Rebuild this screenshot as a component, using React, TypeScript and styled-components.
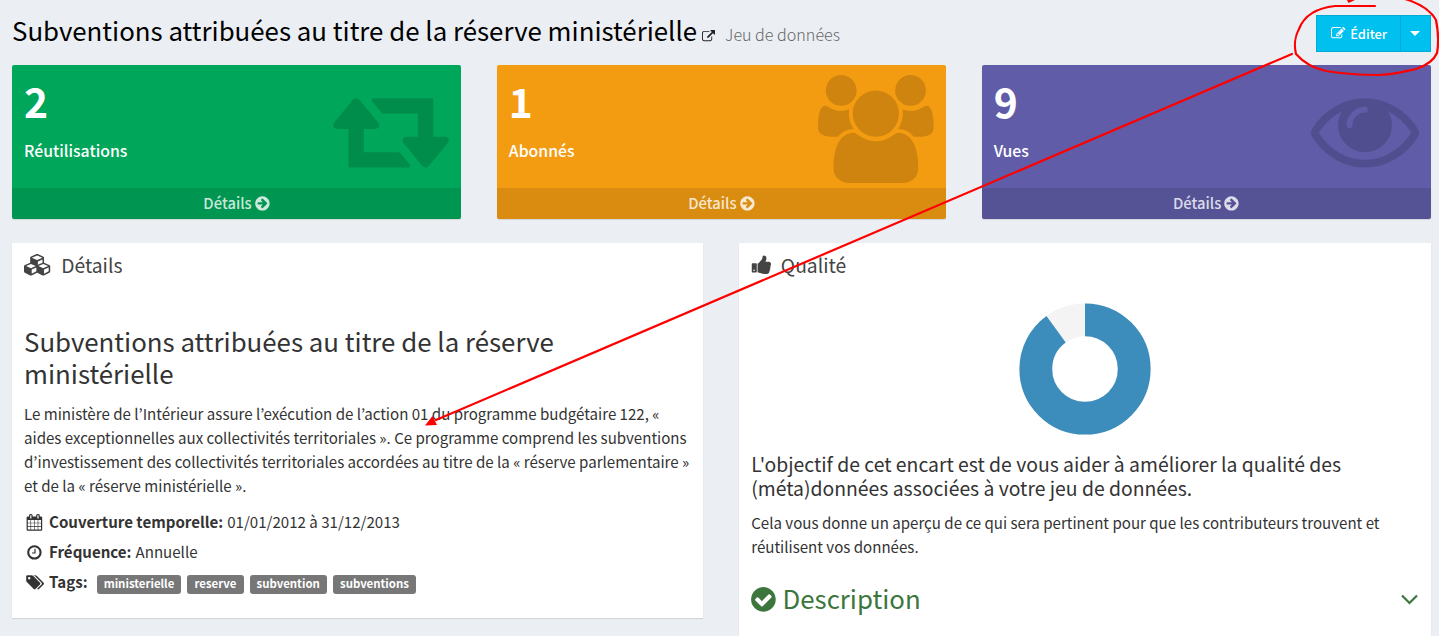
import React from "react";
import styled, { createGlobalStyle } from "styled-components";

const Global = createGlobalStyle`
  * { box-sizing: border-box; }
  body {
    margin: 0;
    background: #ebeff4;
    color: #333;
    font-family: "Noto Sans CJK KR", sans-serif;
    font-size: 15.08px;
    line-height: 24px;
    overflow: hidden;
  }
  h1, h2, h3, h4, p { margin: 0; font-weight: 400; }
`;

const ICONS = {
  retweet: { w: 1920, d: "M1280 1504q0 13-9.5 22.5t-22.5 9.5h-960q-8 0-13.5-2t-9-7-5.5-8-3-11.5-1-11.5v-600h-192q-26 0-45-19t-19-45q0-24 15-41l320-384q19-22 49-22t49 22l320 384q15 17 15 41 0 26-19 45t-45 19h-192v384h576q16 0 25 11l160 192q7 10 7 21zm640-416q0 24-15 41l-320 384q-20 23-49 23t-49-23l-320-384q-15-17-15-41 0-26 19-45t45-19h192v-384h-576q-16 0-25-12l-160-192q-7-9-7-20 0-13 9.5-22.5t22.5-9.5h960q8 0 13.5 2t9 7 5.5 8 3 11.5 1 11.5v600h192q26 0 45 19t19 45z" },
  users: { w: 1920, d: "M593 896q-162 5-265 128h-134q-82 0-138-40.5t-56-118.5q0-353 124-353 6 0 43.5 21t97.5 42.5 119 21.5q67 0 133-23-5 37-5 66 0 139 81 256zm1071 637q0 120-73 189.5t-194 69.5h-874q-121 0-194-69.5t-73-189.5q0-53 3.5-103.5t14-109 26.5-108.5 43-97.5 62-81 85.5-53.5 111.5-20q10 0 43 21.5t73 48 107 48 135 21.5 135-21.5 107-48 73-48 43-21.5q61 0 111.5 20t85.5 53.5 62 81 43 97.5 26.5 108.5 14 109 3.5 103.5zm-1024-1277q0 106-75 181t-181 75-181-75-75-181 75-181 181-75 181 75 75 181zm704 384q0 159-112.5 271.5t-271.5 112.5-271.5-112.5-112.5-271.5 112.5-271.5 271.5-112.5 271.5 112.5 112.5 271.5zm576 225q0 78-56 118.5t-138 40.5h-134q-103-123-265-128 81-117 81-256 0-29-5-66 66 23 133 23 59 0 119-21.5t97.5-42.5 43.5-21q124 0 124 353zm-128-609q0 106-75 181t-181 75-181-75-75-181 75-181 181-75 181 75 75 181z" },
  eye: { w: 1792, d: "M1664 960q-152-236-381-353 61 104 61 225 0 185-131.5 316.5t-316.5 131.5-316.5-131.5-131.5-316.5q0-121 61-225-229 117-381 353 133 205 333.5 326.5t434.5 121.5 434.5-121.5 333.5-326.5zm-720-384q0-20-14-34t-34-14q-125 0-214.5 89.5t-89.5 214.5q0 20 14 34t34 14 34-14 14-34q0-86 61-147t147-61q20 0 34-14t14-34zm848 384q0 34-20 69-140 230-376.5 368.5t-499.5 138.5-499.5-139-376.5-368q-20-35-20-69t20-69q140-229 376.5-368t499.5-139 499.5 139 376.5 368q20 35 20 69z" },
  external: { w: 1792, d: "M1408 928v320q0 119-84.5 203.5t-203.5 84.5h-832q-119 0-203.5-84.5t-84.5-203.5v-832q0-119 84.5-203.5t203.5-84.5h704q14 0 23 9t9 23v64q0 14-9 23t-23 9h-704q-66 0-113 47t-47 113v832q0 66 47 113t113 47h832q66 0 113-47t47-113v-320q0-14 9-23t23-9h64q14 0 23 9t9 23zm384-864v512q0 26-19 45t-45 19-45-19l-176-176-652 652q-10 10-23 10t-23-10l-114-114q-10-10-10-23t10-23l652-652-176-176q-19-19-19-45t19-45 45-19h512q26 0 45 19t19 45z" },
  edit: { w: 1792, d: "M888 1184l116-116-152-152-116 116v56h96v96h56zm440-720q-16-16-33 1l-350 350q-17 17-1 33t33-1l350-350q17-17 1-33zm80 594v190q0 119-84.5 203.5t-203.5 84.5h-832q-119 0-203.5-84.5t-84.5-203.5v-832q0-119 84.5-203.5t203.5-84.5h832q63 0 117 25 15 7 18 23 3 17-9 29l-49 49q-14 14-32 8-23-6-45-6h-832q-66 0-113 47t-47 113v832q0 66 47 113t113 47h832q66 0 113-47t47-113v-126q0-13 9-22l64-64q15-15 35-7t20 29zm-96-738l288 288-672 672h-288v-288zm444 132l-92 92-288-288 92-92q28-28 68-28t68 28l152 152q28 28 28 68t-28 68z" },
  arrow: { w: 1792, d: "M1413 896q0-27-18-45l-91-91-362-362q-18-18-45-18t-45 18l-91 91q-18 18-18 45t18 45l189 189h-502q-26 0-45 19t-19 45v128q0 26 19 45t45 19h502l-189 189q-19 19-19 45t19 45l91 91q18 18 45 18t45-18l362-362 91-91q18-18 18-45zm251 0q0 209-103 385.5t-279.5 279.5-385.5 103-385.5-103-279.5-279.5-103-385.5 103-385.5 279.5-279.5 385.5-103 385.5 103 279.5 279.5 103 385.5z" },
  check: { w: 1792, d: "M1412 734q0-28-18-46l-91-90q-19-19-45-19t-45 19l-408 407-226-226q-19-19-45-19t-45 19l-91 90q-18 18-18 46 0 27 18 45l362 362q19 19 45 19 27 0 46-19l543-543q18-18 18-45zm252 162q0 209-103 385.5t-279.5 279.5-385.5 103-385.5-103-279.5-279.5-103-385.5 103-385.5 279.5-279.5 385.5-103 385.5 103 279.5 279.5 103 385.5z" },
  thumb: { w: 1792, d: "M320 1344q0-26-19-45t-45-19q-27 0-45.5 19t-18.5 45q0 27 18.5 45.5t45.5 18.5q26 0 45-18.5t19-45.5zm160-512v640q0 26-19 45t-45 19h-288q-26 0-45-19t-19-45v-640q0-26 19-45t45-19h288q26 0 45 19t19 45zm1184 0q0 86-55 149 15 44 15 76 3 76-43 137 17 56 0 117-15 57-54 94 9 112-49 181-64 76-197 78h-129q-66 0-144-15.5t-121.5-29-120.5-39.5q-123-43-158-44-26-1-45-19.5t-19-44.5v-641q0-25 18-43.5t43-20.5q24-2 76-59t101-121q68-87 101-120 18-18 31-48t17.5-48.5 13.5-60.5q7-39 12.5-61t19.5-52 34-50q19-19 45-19 46 0 82.5 10.5t60 26 40 40.5 24 45 12 50 5 45 .5 39q0 38-9.5 76t-19 60-27.5 56q-3 6-10 18t-11 22-8 24h277q78 0 135 57t57 135z" },
  clock: { w: 1792, d: "M1024 544v448q0 14-9 23t-23 9h-320q-14 0-23-9t-9-23v-64q0-14 9-23t23-9h224v-352q0-14 9-23t23-9h64q14 0 23 9t9 23zm416 352q0-148-73-273t-198-198-273-73-273 73-198 198-73 273 73 273 198 198 273 73 273-73 198-198 73-273zm224 0q0 209-103 385.5t-279.5 279.5-385.5 103-385.5-103-279.5-279.5-103-385.5 103-385.5 279.5-279.5 385.5-103 385.5 103 279.5 279.5 103 385.5z" },
  tags: { w: 2048, d: "M576 448q0-53-37.5-90.5t-90.5-37.5-90.5 37.5-37.5 90.5 37.5 90.5 90.5 37.5 90.5-37.5 37.5-90.5zm1067 576q0 53-37 90l-491 492q-39 37-91 37-53 0-90-37l-715-716q-38-37-64.5-101t-26.5-117v-416q0-52 38-90t90-38h416q53 0 117 26.5t102 64.5l715 714q37 39 37 91zm384 0q0 53-37 90l-491 492q-39 37-91 37-36 0-59-14t-53-45l470-470q37-37 37-90 0-52-37-91l-715-714q-38-38-102-64.5t-117-26.5h224q53 0 117 26.5t102 64.5l715 714q37 39 37 91z" },
  calendar: { w: 1792, d: "M192 1664h288v-288h-288v288zm352 0h320v-288h-320v288zm-352-352h288v-320h-288v320zm352 0h320v-320h-320v320zm-352-384h288v-288h-288v288zm736 736h320v-288h-320v288zm-384-736h320v-288h-320v288zm768 736h288v-288h-288v288zm-384-352h320v-320h-320v320zm-352-864v-288q0-13-9.5-22.5t-22.5-9.5h-64q-13 0-22.5 9.5t-9.5 22.5v288q0 13 9.5 22.5t22.5 9.5h64q13 0 22.5-9.5t9.5-22.5zm736 864h288v-320h-288v320zm-384-384h320v-288h-320v288zm384 0h288v-288h-288v288zm32-480v-288q0-13-9.5-22.5t-22.5-9.5h-64q-13 0-22.5 9.5t-9.5 22.5v288q0 13 9.5 22.5t22.5 9.5h64q13 0 22.5-9.5t9.5-22.5zm384-64v1280q0 52-38 90t-90 38h-1408q-52 0-90-38t-38-90v-1280q0-52 38-90t90-38h128v-96q0-66 47-113t113-47h64q66 0 113 47t47 113v96h384v-96q0-66 47-113t113-47h64q66 0 113 47t47 113v96h128q52 0 90 38t38 90z" },
  cubes: { w: 2176, d: "M640 1632l384-192v-314l-384 164v342zm-64-454l404-173-404-173-404 173zm1088 454l384-192v-314l-384 164v342zm-64-454l404-173-404-173-404 173zm-448-293l384-165v-266l-384 164v267zm-64-379l441-189-441-189-441 189zm1088 518v416q0 36-19 67t-52 47l-448 224q-25 14-57 14t-57-14l-448-224q-4-2-7-4-2 2-7 4l-448 224q-25 14-57 14t-57-14l-448-224q-33-16-52-47t-19-67v-416q0-38 21.5-70t56.5-48l434-186v-400q0-38 21.5-70t56.5-48l448-192q23-10 50-10t50 10l448 192q35 16 56.5 48t21.5 70v400l434 186q36 16 57 48t21 70z" },
};
type IconName = keyof typeof ICONS;

const Svg = styled.svg`
  display: block;
  flex: none;
  fill: currentColor;
  overflow: visible;
`;

function Icon({ name, size }: { name: IconName; size: number }) {
  const { w, d } = ICONS[name];
  return (
    <Svg width={(size * w) / 1792} height={size} viewBox={`0 0 ${w} 1792`}>
      <path d={d} />
    </Svg>
  );
}

const Page = styled.main`
  position: relative;
  height: 636px;
  padding: 0 8.5px 0 12px;
  overflow: hidden;
`;

const Header = styled.header`
  display: flex;
  justify-content: space-between;
  height: 65px;
`;

const Heading = styled.div`
  display: flex;
  align-items: baseline;
  padding-top: 12px;
`;

const PageTitle = styled.h1`
  font-size: 25.83px;
  line-height: 36px;
  color: #000;
`;

const LinkIcon = styled.span`
  color: #222;
  margin: 0 10px 0 5px;
  transform: translateY(2px);
`;

const Kind = styled.small`
  font-size: 16.1px;
  font-weight: 300;
  color: #666;
`;

const ButtonGroup = styled.div`
  display: flex;
  margin-top: 15px;
  height: 37px;
`;

const Button = styled.button<{ $width: number }>`
  display: flex;
  align-items: center;
  justify-content: center;
  gap: 5px;
  width: ${(p) => p.$width}px;
  padding: 0 0 0 2px;
  border: 1px solid #00acd6;
  background: #00c0ef;
  color: #fff;
  font: 500 12.9px/20px "Noto Sans CJK KR", sans-serif;

  & + & { border-left: 0; padding: 0; }
`;

const Caret = styled.span`
  border: 5px solid transparent;
  border-top-color: #fff;
  border-bottom: 0;
`;

const Stats = styled.section`
  display: grid;
  grid-template-columns: repeat(3, minmax(0, 1fr));
  gap: 36px;
  height: 154px;
`;

const StatCard = styled.article<{ $color: string }>`
  display: flex;
  flex-direction: column;
  border-radius: 2px;
  overflow: hidden;
  background: ${(p) => p.$color};
  color: #fff;
  box-shadow: 0 1px 1px rgba(0, 0, 0, 0.1);
`;

const StatBody = styled.div`
  display: flex;
  justify-content: space-between;
  height: 122.5px;
  padding: 11px 12px;
`;

const StatValue = styled.div`
  font-size: 40.8px;
  font-weight: 700;
  line-height: 50px;
`;

const StatLabel = styled.div`
  margin-top: 11.5px;
  font-size: 15.8px;
  font-weight: 500;
  line-height: 26px;
`;

const StatIcon = styled.div`
  margin-top: -1px;
  color: rgba(0, 0, 0, 0.15);
`;

const StatFooter = styled.div`
  display: flex;
  align-items: center;
  justify-content: center;
  gap: 2px;
  flex: 1;
  padding-left: 1px;
  background: rgba(0, 0, 0, 0.1);
  color: rgba(255, 255, 255, 0.8);
  font-size: 14.8px;
  font-weight: 500;
`;

const Columns = styled.section`
  display: grid;
  grid-template-columns: repeat(2, minmax(0, 1fr));
  align-items: start;
  gap: 36px;
  margin-top: 23.5px;
`;

const Box = styled.article<{ $height: number }>`
  height: ${(p) => p.$height}px;
  padding: 0 12px;
  background: #fff;
  box-shadow: 0 1px 1px rgba(0, 0, 0, 0.1);
`;

const BoxHeader = styled.header<{ $gap: number }>`
  display: flex;
  align-items: center;
  gap: ${(p) => p.$gap}px;
  height: 47px;
  padding-bottom: 2px;
  color: #444;
`;

const BoxTitle = styled.h3`
  font-size: 19.3px;
`;

const DatasetTitle = styled.h2`
  margin-top: 35.5px;
  padding-bottom: 2px;
  font-size: 25.83px;
  line-height: 31.7px;
`;

const Text = styled.p<{ $top: number }>`
  margin-top: ${(p) => p.$top}px;
  white-space: nowrap;
`;

const Facts = styled.div`
  display: grid;
  gap: 6px;
  margin-top: 12px;
`;

const Fact = styled.div`
  display: flex;
  align-items: center;
  height: 24px;
`;

const FactIcon = styled.span`
  display: flex;
  justify-content: center;
  width: 21px;
  margin-right: 4px;
`;

const FactName = styled.b`
  margin-right: 4px;
`;

const Tag = styled.span`
  height: 19px;
  margin: 5px 1px 0 5px;
  padding: 0 7.1px;
  border-radius: 3px;
  background: #777;
  color: #fff;
  font-size: 11.4px;
  font-weight: 700;
  line-height: 17px;
`;

const Chart = styled.div`
  display: flex;
  justify-content: center;
  margin-top: 13px;
  height: 132px;
`;

const Goal = styled.h4`
  margin-top: 18.5px;
  padding-bottom: 0.5px;
  font-size: 19.38px;
  line-height: 23.8px;
  white-space: nowrap;
`;

const Criterion = styled.div`
  display: flex;
  align-items: center;
  height: 32px;
  margin: 24px 0 0 -2px;
  color: #3c763d;
`;

const CriterionName = styled.span`
  margin-left: 4.5px;
  padding-bottom: 3px;
  font-size: 25.8px;
`;

const Chevron = styled.svg`
  margin-left: auto;
  margin-right: 1px;
`;

const Annotation = styled.svg`
  position: absolute;
  inset: 0;
  pointer-events: none;
`;

const STATS: { value: number; label: string; color: string; icon: IconName }[] = [
  { value: 2, label: "Réutilisations", color: "#00a65a", icon: "retweet" },
  { value: 1, label: "Abonnés", color: "#f39c12", icon: "users" },
  { value: 9, label: "Vues", color: "#605ca8", icon: "eye" },
];

const TAGS = ["ministerielle", "reserve", "subvention", "subventions"];

export default function App() {
  return (
    <Page>
      <Global />
      <Header>
        <Heading>
          <PageTitle>Subventions attribuées au titre de la réserve ministérielle</PageTitle>
          <LinkIcon><Icon name="external" size={13} /></LinkIcon>
          <Kind>Jeu de données</Kind>
        </Heading>
        <ButtonGroup>
          <Button $width={85}><Icon name="edit" size={14.4} />Éditer</Button>
          <Button $width={30}><Caret /></Button>
        </ButtonGroup>
      </Header>

      <Stats>
        {STATS.map((s) => (
          <StatCard key={s.label} $color={s.color}>
            <StatBody>
              <div>
                <StatValue>{s.value}</StatValue>
                <StatLabel>{s.label}</StatLabel>
              </div>
              <StatIcon><Icon name={s.icon} size={108} /></StatIcon>
            </StatBody>
            <StatFooter>Détails <Icon name="arrow" size={16.8} /></StatFooter>
          </StatCard>
        ))}
      </Stats>

      <Columns>
        <Box $height={375.5}>
          <BoxHeader $gap={11}>
            <Icon name="cubes" size={21.6} />
            <BoxTitle>Détails</BoxTitle>
          </BoxHeader>
          <DatasetTitle>
            Subventions attribuées au titre de la réserve<br />ministérielle
          </DatasetTitle>
          <Text $top={12}>
            Le ministère de l’Intérieur assure l’exécution de l’action 01 du programme budgétaire 122, «<br />
            aides exceptionnelles aux collectivités territoriales ». Ce programme comprend les subventions<br />
            d’investissement des collectivités territoriales accordées au titre de la « réserve parlementaire »<br />
            et de la « réserve ministérielle ».
          </Text>
          <Facts>
            <Fact>
              <FactIcon><Icon name="calendar" size={16.8} /></FactIcon>
              <FactName>Couverture temporelle:</FactName>01/01/2012 à 31/12/2013
            </Fact>
            <Fact>
              <FactIcon><Icon name="clock" size={16.8} /></FactIcon>
              <FactName>Fréquence:</FactName>Annuelle
            </Fact>
            <Fact>
              <FactIcon><Icon name="tags" size={16.8} /></FactIcon>
              <FactName>Tags:</FactName>
              {TAGS.map((t) => <Tag key={t}>{t}</Tag>)}
            </Fact>
          </Facts>
        </Box>

        <Box $height={420}>
          <BoxHeader $gap={8}>
            <Icon name="thumb" size={21.6} />
            <BoxTitle>Qualité</BoxTitle>
          </BoxHeader>
          <Chart>
            <svg width="132" height="132" viewBox="-66 -66 132 132">
              <circle r="49.2" fill="none" stroke="#f4f4f4" strokeWidth="32.8" />
              <circle
                r="49.2" fill="none" stroke="#3c8dbc" strokeWidth="32.8"
                pathLength="100" strokeDasharray="90 10" transform="rotate(-90)"
              />
            </svg>
          </Chart>
          <Goal>
            L'objectif de cet encart est de vous aider à améliorer la qualité des<br />
            (méta)données associées à votre jeu de données.
          </Goal>
          <Text $top={10}>
            Cela vous donne un aperçu de ce qui sera pertinent pour que les contributeurs trouvent et<br />
            réutilisent vos données.
          </Text>
          <Criterion>
            <Icon name="check" size={28.8} />
            <CriterionName>Description</CriterionName>
            <Chevron width="17" height="11" viewBox="0 0 17 11">
              <path d="M1 1.5L8.5 9L16 1.5" fill="none" stroke="currentColor" strokeWidth="2.2" />
            </Chevron>
          </Criterion>
        </Box>
      </Columns>

      <Annotation width="1439" height="636" viewBox="0 0 1439 636">
        <g fill="none" stroke="#f00" strokeWidth="2.2" strokeLinecap="round" strokeLinejoin="round">
          <path d="M1292 54L436 420" />
          <path d="M1375 6H1335C1316 8 1304 16 1299 29C1295 36 1294 46 1296 54C1303 62 1312 68 1326 71C1345 74 1362 75 1378 75C1392 75 1402 72 1416 69C1428 65 1434 60 1437 53C1439 42 1438 30 1436 20C1430 9 1418 3 1405 -1" />
        </g>
        <path d="M425 425.5L432.500 416L437 425Z" fill="#f00" />
        <path d="M1347 0H1355L1348.500 3Z" fill="#f00" />
      </Annotation>
    </Page>
  );
}
